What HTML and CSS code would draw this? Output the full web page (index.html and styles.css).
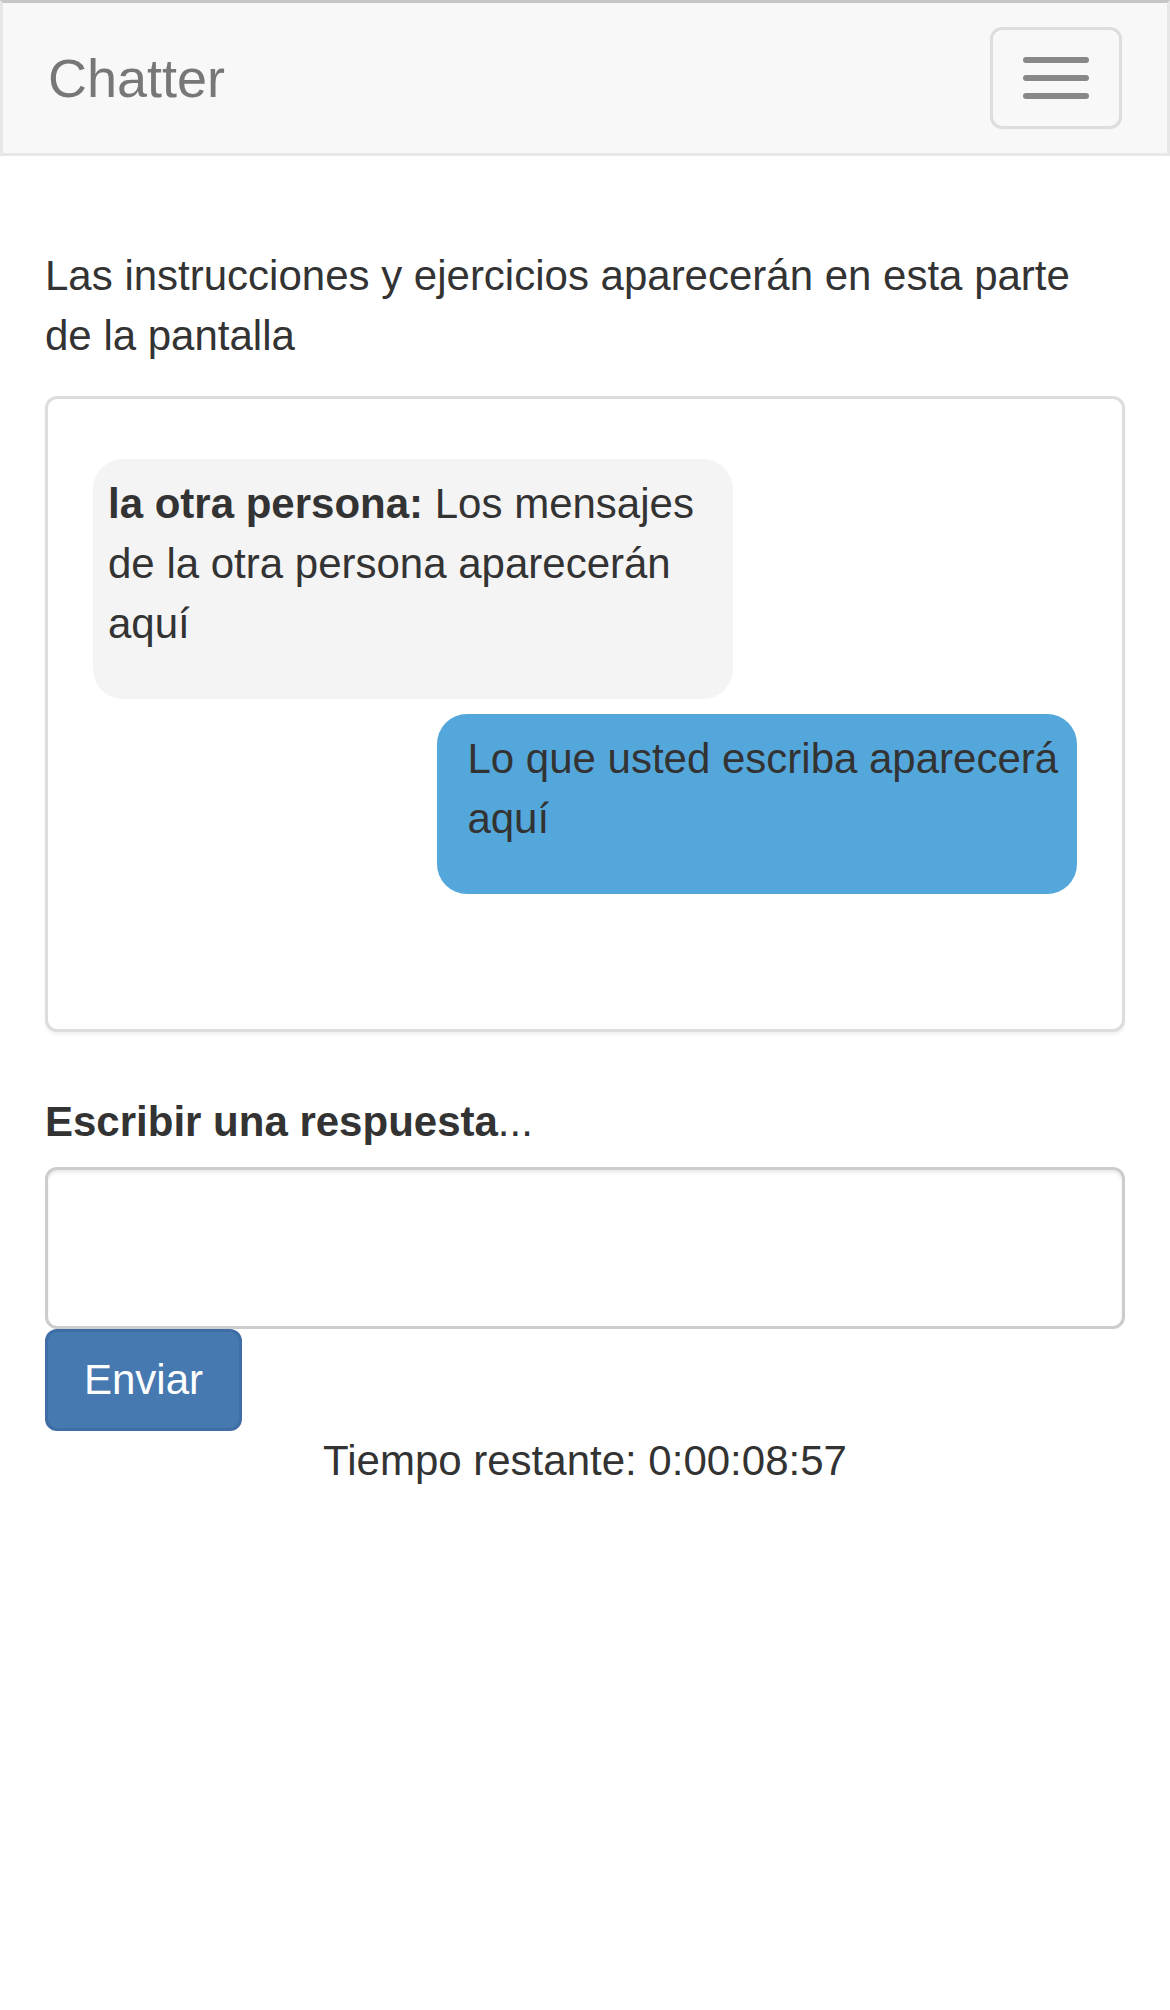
FILE: index.html
```html
<!DOCTYPE html>
<html lang="es">
<head>
<meta charset="utf-8">
<title>Chatter</title>
<link rel="stylesheet" href="styles.css">
</head>
<body>
<nav class="navbar">
  <a class="brand" href="#">Chatter</a>
  <button class="toggle" type="button" aria-label="Menú">
    <span class="bar"></span>
    <span class="bar"></span>
    <span class="bar"></span>
  </button>
</nav>
<main class="container">
  <p class="instructions">Las instrucciones y ejercicios aparecerán en esta parte de la pantalla</p>
  <div class="chat-panel">
    <div class="msg msg-other"><p><strong>la otra persona:</strong> Los mensajes de la otra persona aparecerán aquí</p></div>
    <div class="msg msg-self"><p>Lo que usted escriba aparecerá aquí</p></div>
  </div>
  <form class="reply">
    <label class="reply-label" for="reply-text"><strong>Escribir una respuesta</strong>...</label>
    <textarea id="reply-text" class="reply-input"></textarea>
    <button class="btn-send" type="button">Enviar</button>
  </form>
  <div class="timer">Tiempo restante: 0:00:08:57</div>
</main>
</body>
</html>
```
FILE: styles.css
```css
* { box-sizing: border-box; }
html, body { margin: 0; padding: 0; background: #fff; }
body {
  font-family: "Liberation Sans", Arial, Helvetica, sans-serif;
  font-size: 42px;
  line-height: 60px;
  color: #333;
}
.navbar {
  display: flex;
  align-items: flex-start;
  justify-content: space-between;
  height: 156px;
  background: #f8f8f8;
  border: 3px solid #e7e7e7;
  border-top-color: #c6c6c6;
  margin-bottom: 60px;
}
.brand {
  display: block;
  padding: 45px 0 0 45px;
  font-size: 54px;
  line-height: 60px;
  color: #777;
  text-decoration: none;
}
.toggle {
  display: flex;
  flex-direction: column;
  gap: 12px;
  margin: 24px 45px 0 0;
  padding: 27px 30px;
  background: transparent;
  border: 3px solid #ddd;
  border-radius: 12px;
}
.bar {
  display: block;
  width: 66px;
  height: 6px;
  border-radius: 3px;
  background: #888;
}
.container { padding: 30px 45px 0; }
.instructions { margin: 0 0 30px; }
.chat-panel {
  height: 636px;
  padding: 45px;
  border: 3px solid #ddd;
  border-radius: 12px;
  box-shadow: 0 3px 3px rgba(0,0,0,0.05);
  margin-bottom: 60px;
  background: #fff;
}
.msg {
  width: 65%;
  margin-top: 15px;
  padding: 15px;
  border-radius: 30px;
}
.msg p { margin: 0 0 30px; }
.msg-other { background: #f4f4f4; }
.msg-self {
  margin-left: auto;
  padding-left: 30px;
  background: #54a7db;
}
.reply { margin: 0; }
.reply-label {
  display: block;
  margin-bottom: 15px;
}
.reply-input {
  display: block;
  width: 100%;
  height: 162px;
  margin: 0;
  padding: 18px 36px;
  font: inherit;
  border: 3px solid #ccc;
  border-radius: 12px;
  box-shadow: inset 0 3px 3px rgba(0,0,0,0.075);
  resize: none;
  background: #fff;
}
.btn-send {
  display: inline-block;
  margin: 0;
  padding: 18px 36px;
  font: inherit;
  color: #fff;
  background: #4779b1;
  border: 3px solid #3e6ea5;
  border-radius: 12px;
}
.timer { text-align: center; }
```
